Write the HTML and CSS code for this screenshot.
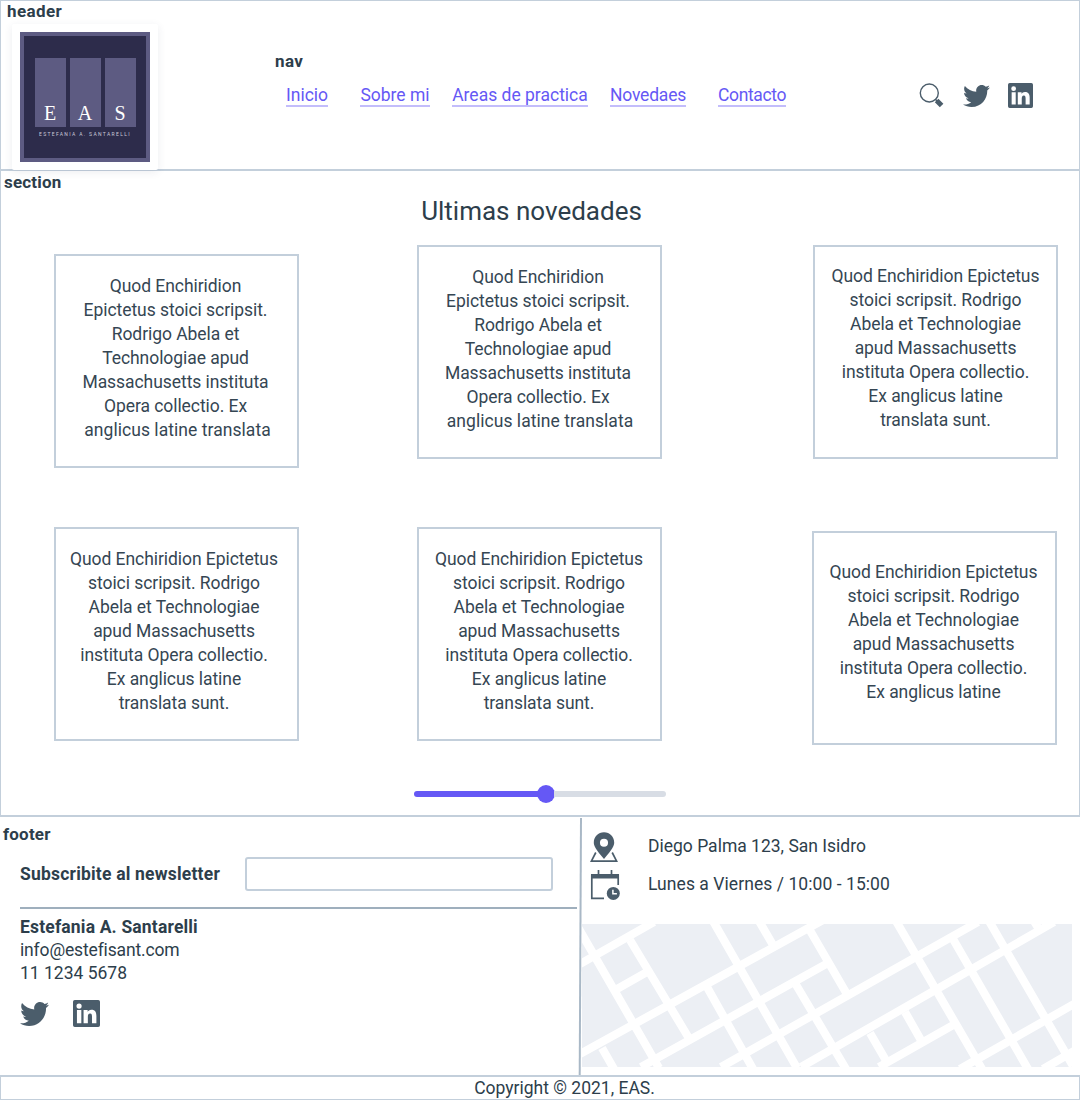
FILE: index.html
```html
<!DOCTYPE html>
<html lang="es">
<head>
<meta charset="utf-8">
<title>Estefania A. Santarelli</title>
<link rel="stylesheet" href="styles.css">
</head>
<body>
<svg class="defs" width="0" height="0">
  <symbol id="twitter" viewBox="0 48 512 416" preserveAspectRatio="none"><path d="M459.37 151.716c.325 4.548.325 9.097.325 13.645 0 138.72-105.583 298.558-298.558 298.558-59.452 0-114.68-17.219-161.137-47.106 8.447.974 16.568 1.299 25.34 1.299 49.055 0 94.213-16.568 130.274-44.832-46.132-.975-84.792-31.188-98.112-72.772 6.498.974 12.995 1.624 19.818 1.624 9.421 0 18.843-1.3 27.614-3.573-48.081-9.747-84.143-51.98-84.143-102.985v-1.299c13.969 7.797 30.214 12.67 47.431 13.319-28.264-18.843-46.781-51.005-46.781-87.391 0-19.492 5.197-37.36 14.294-52.954 51.655 63.675 129.3 105.258 216.365 109.807-1.624-7.797-2.599-15.918-2.599-24.04 0-57.828 46.782-104.934 104.934-104.934 30.213 0 57.502 12.67 76.67 33.137 23.715-4.548 46.456-13.32 66.599-25.34-7.798 24.366-24.366 44.833-46.132 57.827 21.117-2.273 41.584-8.122 60.426-16.243-14.292 20.791-32.161 39.308-52.628 54.253z"/></symbol>
  <symbol id="linkedin" viewBox="0 0 24 24"><path fill-rule="evenodd" d="M1.6 0h20.8A1.6 1.6 0 0 1 24 1.6v20.8a1.6 1.6 0 0 1-1.6 1.6H1.6A1.6 1.6 0 0 1 0 22.400V1.6A1.6 1.6 0 0 1 1.6 0zM3.500 8.900v11.800h3.900V8.900zM5.400 3.100a2.300 2.300 0 1 0 0 4.600a2.300 2.300 0 1 0 0-4.600zM9.400 8.900v11.800h3.800v-5.900c0-1.500.4-2.900 2-2.900s1.700 1.600 1.700 3v5.800h3.900v-6.500c0-3.300-.9-5.600-4.500-5.600-1.700 0-2.800.9-3.200 1.800h-.1V8.900z"/></symbol>
</svg>

<header class="header">
  <div class="brand">
    <strong class="label">header</strong>
    <div class="logo-card">
      <div class="logo">
        <div class="logo-bars"><span>E</span><span>A</span><span>S</span></div>
        <div class="logo-name">ESTEFANIA A. SANTARELLI</div>
      </div>
    </div>
  </div>
  <nav class="nav">
    <strong class="label">nav</strong>
    <div class="links">
      <a class="l-inicio">Inicio</a><a class="l-sobre">Sobre mi</a><a class="l-areas">Areas de practica</a><a class="l-nov">Novedaes</a><a class="l-cont">Contacto</a>
    </div>
  </nav>
  <div class="tools">
    <svg class="search" width="25" height="25" viewBox="0 0 25 25"><circle cx="10.300" cy="10" r="9" fill="none" stroke="#4b5d6b" stroke-width="1.400"/><path d="M16.300 16.300l2 2" stroke="#4b5d6b" stroke-width="1.400"/><path d="M17.600 17.600l5 5" stroke="#4b5d6b" stroke-width="5"/></svg>
    <svg class="bird" width="27" height="22"><use href="#twitter"/></svg>
    <svg class="in" width="25" height="25"><use href="#linkedin"/></svg>
  </div>
</header>

<section class="section">
  <strong class="label">section</strong>
  <h1 class="title">Ultimas novedades</h1>
  <div class="cards">
    <article class="card c1"><p>Quod Enchiridion<br>Epictetus stoici scripsit.<br>Rodrigo Abela et<br>Technologiae apud<br>Massachusetts instituta<br>Opera collectio. Ex<br><span class="wide">anglicus latine translata</span></p></article>
    <article class="card c2"><p>Quod Enchiridion<br>Epictetus stoici scripsit.<br>Rodrigo Abela et<br>Technologiae apud<br>Massachusetts instituta<br>Opera collectio. Ex<br><span class="wide">anglicus latine translata</span></p></article>
    <article class="card c3"><p>Quod Enchiridion Epictetus<br>stoici scripsit. Rodrigo<br>Abela et Technologiae<br>apud Massachusetts<br>instituta Opera collectio.<br>Ex anglicus latine<br>translata sunt.</p></article>
    <article class="card c4"><p>Quod Enchiridion Epictetus<br>stoici scripsit. Rodrigo<br>Abela et Technologiae<br>apud Massachusetts<br>instituta Opera collectio.<br>Ex anglicus latine<br>translata sunt.</p></article>
    <article class="card c5"><p>Quod Enchiridion Epictetus<br>stoici scripsit. Rodrigo<br>Abela et Technologiae<br>apud Massachusetts<br>instituta Opera collectio.<br>Ex anglicus latine<br>translata sunt.</p></article>
    <article class="card c6"><p>Quod Enchiridion Epictetus<br>stoici scripsit. Rodrigo<br>Abela et Technologiae<br>apud Massachusetts<br>instituta Opera collectio.<br>Ex anglicus latine</p></article>
  </div>
  <div class="slider"><span class="fill"></span><span class="knob"></span><span class="rest"></span></div>
</section>

<footer class="footer">
  <div class="contact">
    <strong class="label">footer</strong>
    <div class="newsletter"><label for="mail">Subscribite al newsletter</label><input id="mail" type="text"></div>
    <div class="person">
      <strong>Estefania A. Santarelli</strong>
      <span class="mail">info@estefisant.com</span>
      <span class="phone">11 1234 5678</span>
    </div>
    <div class="social">
      <svg width="29" height="24"><use href="#twitter"/></svg>
      <svg width="27" height="27"><use href="#linkedin"/></svg>
    </div>
  </div>
  <svg class="divider" width="4" height="258" viewBox="0 0 4 258"><path d="M3 1L1.700 258" stroke="#a9b8c6" stroke-width="2"/></svg>
  <div class="place">
    <div class="info">
      <svg width="30" height="32" viewBox="0 0 30 32"><path fill="#4b5d6b" fill-rule="evenodd" d="M14 .3C8.200.3 3.800 4.700 3.800 10.500c0 3.400 1.700 6.500 10.200 16.500 8.500-10 10.200-13.100 10.200-16.500C24.200 4.700 19.800.3 14 .3zm0 6.400a4 4 0 1 1 0 8.100a4 4 0 1 1 0-8.100z"/><path d="M5.800 20.500L1.400 29.200h25.200l-4.400-8.700" fill="none" stroke="#4b5d6b" stroke-width="1.700"/></svg>
      <span class="address">Diego Palma 123, San Isidro</span>
    </div>
    <div class="info">
      <svg width="30" height="32" viewBox="0 0 30 32"><path fill="none" stroke="#4b5d6b" stroke-width="1.700" d="M14 28.300H1.800V5.300H28.200V15M8.500 0v5M21.500 0v5"/><path fill="#4b5d6b" d="M1 4h28v4.500H1z"/><circle cx="23.300" cy="23.400" r="6.500" fill="#4b5d6b"/><path d="M22.900 19.700v4h4" fill="none" stroke="#fff" stroke-width="1.500"/></svg>
      <span class="hours">Lunes a Viernes / 10:00 - 15:00</span>
    </div>
    <svg class="map" width="490" height="143" viewBox="0 0 490 143">
      <path fill="#eceff4" d="M0 0h490v143H0z"/>
      <g fill="none" stroke="#fff" stroke-width="8.200">
        <path d="M-2 40L72-2M-2 130L241-4M59 143L246 39M139 143L396-2M219 143L472-2M297 143L373 100M378 145L492 80M461 145L492 127M35 65L65 48"/>
        <path d="M-7-2L77 144M48 16L108 116M20 124L32 145M131-3L215 144M177-3L191 21M125 63L171 145M226 3L266 72M213 59L264 145M314-3L400 145M371 15L446 145M407-3L491 142M288 109L306 140M323 88L340 118M452-3L458 7"/>
      </g>
    </svg>
  </div>
</footer>
<div class="copyright"><span>Copyright © 2021, EAS.</span></div>
</body>
</html>
```

FILE: styles.css
```css
* { box-sizing: border-box; }
body {
  margin: 0;
  width: 1080px;
  height: 1100px;
  display: flex;
  flex-direction: column;
  overflow: hidden;
  background: #fff;
  color: #2d3e4b;
  font-family: Roboto, "Liberation Sans", sans-serif;
  font-size: 17.5px;
  line-height: 24px;
}
.defs { position: absolute; }
svg { display: block; flex: none; }
.label { display: block; line-height: 20px; font-size: 17px; letter-spacing: .4px; }

.header {
  height: 171px;
  display: flex;
  border: 1px solid #c3cfdb;
  border-bottom-width: 2px;
}
.brand { width: 274px; }
.brand .label { padding-left: 6px; }
.logo-card {
  width: 146px;
  height: 146px;
  margin: 3px 0 0 11px;
  padding: 8px;
  background: #fff;
  border-radius: 2px;
  box-shadow: 0 2px 8px rgba(40, 50, 90, .09);
}
.logo {
  height: 130px;
  padding-top: 22px;
  border: 4px solid #5d5b82;
  background: #2d2c4b;
  color: #fff;
}
.logo-bars { display: flex; justify-content: center; gap: 4px; }
.logo-bars span {
  width: 31px;
  height: 69px;
  padding-top: 42px;
  background: #5d5b82;
  text-align: center;
  font: 20px/26px "Liberation Serif", serif;
}
.logo-name {
  margin-top: 4px;
  text-align: center;
  white-space: nowrap;
  font-size: 5px;
  line-height: 6px;
  letter-spacing: 1.35px;
  color: #c9c8d8;
}
.nav { width: 644px; padding-top: 50px; }
.links { display: flex; padding-left: 11px; margin-top: 11px; }
.links a {
  height: 25px;
  border-bottom: 2px solid #c3bdfb;
  color: #6558f5;
  line-height: 26px;
  text-align: center;
  white-space: nowrap;
}
.l-inicio { width: 42px; margin-right: 32px; }
.l-sobre { width: 70px; margin-right: 22px; }
.l-areas { width: 136px; margin-right: 22px; }
.l-nov { width: 76px; margin-right: 32px; letter-spacing: -.2px; }
.l-cont { width: 68px; letter-spacing: -.35px; }
.tools { display: flex; padding-top: 82px; fill: #4b5d6b; }
.bird { margin: 2px 18px 0 19px; }

.section {
  height: 646px;
  border: solid #c3cfdb;
  border-width: 0 1px 2px;
}
.section .label { padding: 1px 0 0 3px; letter-spacing: .2px; }
.title {
  margin: 3px 0 0 -17px;
  text-align: center;
  font-size: 26px;
  line-height: 32px;
  font-weight: 400;
}
.cards {
  display: grid;
  grid-template-columns: 363px 396px 245px;
  grid-template-rows: 282px 213px;
  margin: 18px 0 0 53px;
}
.card {
  width: 245px;
  height: 214px;
  padding-top: 18px;
  border: 2px solid #c3cfdb;
  text-align: center;
  white-space: nowrap;
  letter-spacing: -.06px;
  color: #354653;
}
.card p { margin: 0; }
.wide { letter-spacing: .05px; padding-left: 4px; }
.c1 { margin-top: 9px; padding-right: 2px; }
.c2 { padding-right: 3px; }
.c3 { padding-top: 17px; }
.c4 { padding-right: 5px; }
.c5 { padding-right: 1px; }
.c6 { margin: 4px 0 0 -1px; padding-top: 27px; padding-right: 2px; }
.slider { display: flex; align-items: center; width: 252px; margin: 45px 0 0 413px; }
.fill { width: 124px; height: 6px; border-radius: 3px 0 0 3px; background: #6558f5; }
.knob { width: 18px; height: 18px; margin: 0 -1px; border-radius: 50%; background: #6558f5; }
.rest { flex: 1; height: 6px; border-radius: 0 3px 3px 0; background: #d8dde5; }

.footer { height: 258px; display: flex; }
.contact { width: 578px; padding-top: 7px; }
.contact .label { padding-left: 3px; letter-spacing: .2px; }
.newsletter {
  display: flex;
  align-items: center;
  height: 65px;
  margin-left: 20px;
  padding-bottom: 3px;
  border-bottom: 2px solid #9fafbd;
  font-weight: 700;
  letter-spacing: .2px;
  width: 557px;
}
.newsletter label { width: 225px; }
.newsletter input { width: 308px; height: 34px; border: 2px solid #c3cfdb; border-radius: 3px; background: #fff; }
.person { display: flex; flex-direction: column; padding: 7px 0 0 20px; line-height: 23px; }
.person strong { letter-spacing: .17px; }
.mail { letter-spacing: -.15px; }
.social { display: flex; align-items: center; gap: 24px; padding: 15px 0 0 20px; fill: #4b5d6b; }
.place { padding-top: 15px; width: 498px; }
.info { display: flex; height: 38px; padding-left: 8px; gap: 28px; }
.info span { line-height: 28px; }
.hours { letter-spacing: .06px; }
.map { margin-top: 16px; }

.copyright {
  height: 25px;
  border: 1px solid #c3cfdb;
  border-top-width: 2px;
  padding-left: 49px;
  text-align: center;
  line-height: 22px;
}
```
